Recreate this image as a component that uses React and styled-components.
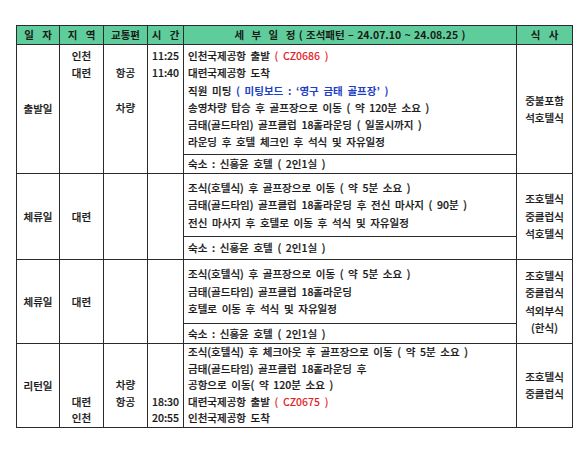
import React from "react";
import styled, { createGlobalStyle } from "styled-components";

const Global = createGlobalStyle`
  html, body { margin: 0; padding: 0; background: #ffffff; }
  body {
    font-family: "Noto Sans CJK KR", "Noto Sans", sans-serif;
    color: #1a1a1a;
  }
`;

const Page = styled.div`
  width: 587px;
  height: 449px;
  padding: 25px 0 0 16px;
  box-sizing: border-box;
`;

const Table = styled.table`
  width: 556px;
  border-collapse: collapse;
  table-layout: fixed;
  font-size: 10.5px;
  font-weight: 500;
  word-spacing: 2.3px;
  -webkit-text-stroke: 0.2px currentColor;
`;

const Head = styled.th`
  height: 18px;
  padding: 0;
  background: #5fcd9b;
  border: 1px solid #2b2b2b;
  font-weight: 700;
  line-height: 18px;
  text-align: center;
  white-space: nowrap;
  word-spacing: ${(p) => p.$ws || "1px"};
  -webkit-text-stroke: 0;
`;

const Spaced = styled.span`
  word-spacing: 5px;
`;

const Cell = styled.td`
  height: ${(p) => p.$h}px;
  padding: ${(p) => (p.$top ? `${p.$top}px` : "0")} ${(p) => p.$pr || 0}px 0 ${(p) => p.$pl || 0}px;
  border: 1px solid #2b2b2b;
  vertical-align: ${(p) => p.$valign || "middle"};
  text-align: ${(p) => p.$align || "center"};
  line-height: ${(p) => p.$lh || 17.3}px;
  white-space: nowrap;
  overflow: visible;
`;

const Line = styled.div`
  height: ${(p) => p.$lh || 17.3}px;
`;

const Red = styled.span`
  color: #e41e26;
  -webkit-text-stroke: 0.05px currentColor;
`;

const Blue = styled.span`
  color: #1d3fc4;
  font-weight: 700;
  -webkit-text-stroke: 0;
`;

const Lines = ({ items, lh }) => (
  <>
    {items.map((t, i) => (
      <Line key={i} $lh={lh}>
        {t}
      </Line>
    ))}
  </>
);

const sections = [
  {
    day: "출발일",
    region: ["인천", "대련"],
    transport: ["", "항공", "", "차량"],
    time: ["11:25", "11:40"],
    detail: [
      <>
        인천국제공항 출발 <Red>( CZ0686 )</Red>
      </>,
      "대련국제공항 도착",
      <>
        직원 미팅 <Blue>( 미팅보드 : ‘영구 금태 골프장’ )</Blue>
      </>,
      "송영차량 탑승 후 골프장으로 이동 ( 약 120분 소요 )",
      "금태(골드타임) 골프클럽 18홀라운딩 ( 일몰시까지 )",
      "라운딩 후 호텔 체크인 후 석식 및 자유일정",
    ],
    hotel: "숙소 : 신홍윤 호텔 ( 2인1실 )",
    meals: ["중불포함", "석호텔식"],
    h: 107,
    hh: 18,
    lh: 17.3,
    top: 2,
    aligned: true,
  },
  {
    day: "체류일",
    region: ["대련"],
    transport: [],
    time: [],
    detail: [
      "조식(호텔식) 후 골프장으로 이동 ( 약 5분 소요 )",
      "금태(골드타임) 골프클럽 18홀라운딩 후 전신 마사지 ( 90분 )",
      "전신 마사지 후 호텔로 이동 후 석식 및 자유일정",
    ],
    hotel: "숙소 : 신홍윤 호텔 ( 2인1실 )",
    meals: ["조호텔식", "중클럽식", "석호텔식"],
    h: 62,
    hh: 22,
    lh: 17.3,
  },
  {
    day: "체류일",
    region: ["대련"],
    transport: [],
    time: [],
    detail: [
      "조식(호텔식) 후 골프장으로 이동 ( 약 5분 소요 )",
      "금태(골드타임) 골프클럽 18홀라운딩",
      "호텔로 이동 후 석식 및 자유일정",
    ],
    hotel: "숙소 : 신홍윤 호텔 ( 2인1실 )",
    meals: ["조호텔식", "중클럽식", "석외부식", "(한식)"],
    h: 63,
    hh: 19,
    lh: 17.5,
  },
  {
    day: "리턴일",
    region: ["", "", "", "대련", "인천"],
    transport: ["", "", "차량", "항공"],
    time: ["", "", "", "18:30", "20:55"],
    detail: [
      "조식(호텔식) 후 체크아웃 후 골프장으로 이동 ( 약 5분 소요 )",
      "금태(골드타임) 골프클럽 18홀라운딩 후",
      "공항으로 이동( 약 120분 소요 )",
      <>
        대련국제공항 출발 <Red>( CZ0675 )</Red>
      </>,
      "인천국제공항 도착",
    ],
    meals: ["조호텔식", "중클럽식"],
    h: 82,
    lh: 16.6,
    top: 0,
    aligned: true,
  },
];

const Section = ({ s }) => {
  const span = s.hotel ? 2 : 1;
  const total = s.h + (s.hotel ? s.hh + 1 : 0);
  const side = (items) =>
    s.aligned ? (
      <Cell rowSpan={span} $h={total} $valign="top" $top={s.top} $lh={s.lh}>
        <Lines items={items} lh={s.lh} />
      </Cell>
    ) : (
      <Cell rowSpan={span} $h={total} $lh={s.lh}>
        <Lines items={items} lh={s.lh} />
      </Cell>
    );
  return (
    <>
      <tr>
        <Cell rowSpan={span} $h={total}>
          {s.day}
        </Cell>
        {side(s.region)}
        {side(s.transport)}
        {side(s.time)}
        <Cell
          $h={s.h}
          $align="left"
          $pl={4}
          $valign={s.aligned ? "top" : "middle"}
          $top={s.aligned ? s.top : 0}
          $lh={s.lh}
        >
          <Lines items={s.detail} lh={s.lh} />
        </Cell>
        <Cell rowSpan={span} $h={total} $lh={17.5}>
          <Lines items={s.meals} lh={17.5} />
        </Cell>
      </tr>
      {s.hotel && (
        <tr>
          <Cell $h={s.hh} $align="left" $pl={4}>
            {s.hotel}
          </Cell>
        </tr>
      )}
    </>
  );
};

export default function App() {
  return (
    <Page>
      <Global />
      <Table>
        <colgroup>
          <col style={{ width: 43 }} />
          <col style={{ width: 44 }} />
          <col style={{ width: 44 }} />
          <col style={{ width: 36 }} />
          <col style={{ width: 333 }} />
          <col style={{ width: 56 }} />
        </colgroup>
        <thead>
          <tr>
            <Head $ws="6px">일 자</Head>
            <Head $ws="6px">지 역</Head>
            <Head>교통편</Head>
            <Head $ws="6px">시 간</Head>
            <Head>
              <Spaced>세 부 일 정</Spaced> ( 조석패턴 – 24.07.10 ~ 24.08.25 )
            </Head>
            <Head $ws="6px">식 사</Head>
          </tr>
        </thead>
        <tbody>
          {sections.map((s, i) => (
            <Section key={i} s={s} />
          ))}
        </tbody>
      </Table>
    </Page>
  );
}
